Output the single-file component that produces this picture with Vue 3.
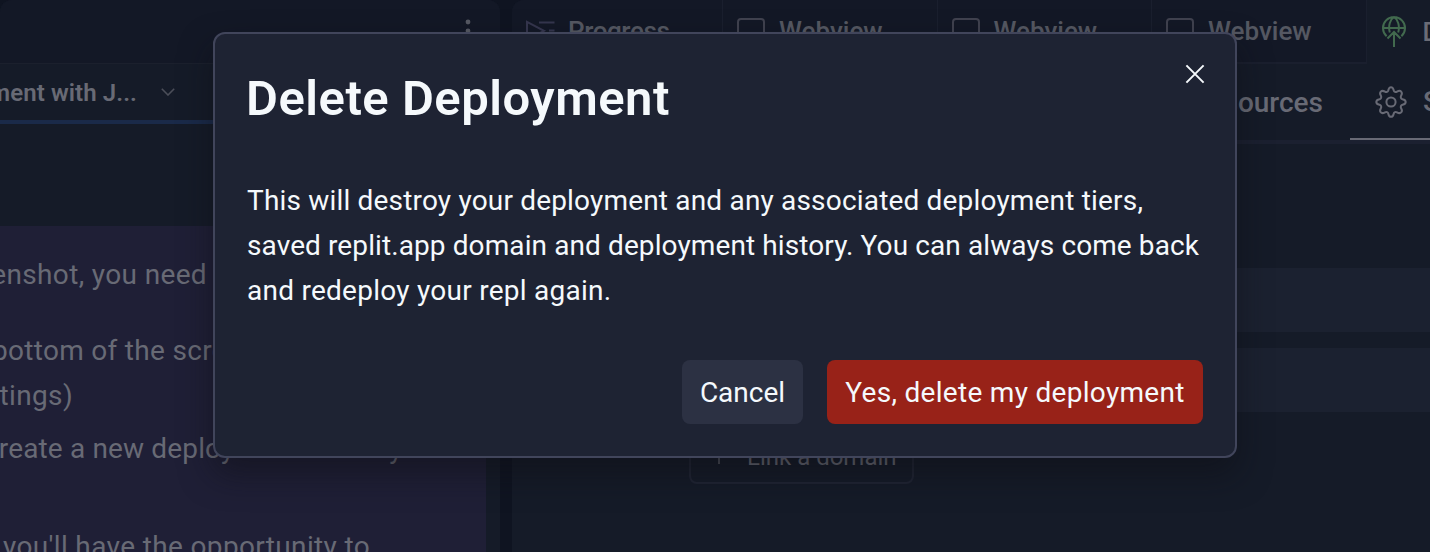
<script setup>
const webviews = [1, 2, 3]
</script>

<template>
  <div class="workspace">
    <section class="pane chat">
      <header class="chat-top">
        <svg class="kebab" width="6" height="24" viewBox="0 0 6 24"><circle cx="3" cy="3" r="2.4" /><circle cx="3" cy="12" r="2.4" /><circle cx="3" cy="21" r="2.4" /></svg>
      </header>
      <div class="chat-bar">
        <span class="chat-name">Deployment with J...</span>
        <svg class="chevron" width="14" height="8" viewBox="0 0 14 8"><path d="M.8 .8 7 7 13.2 .8" /></svg>
      </div>
      <div class="message">
        <p class="row r1">In the screenshot, you need</p>
        <p class="row r2">bottom of the screen</p>
        <p class="row r3">(Settings)</p>
        <p class="row r4">create a new deployment where you</p>
        <p class="row r5">you'll have the opportunity to</p>
      </div>
    </section>

    <section class="pane tool">
      <nav class="tabs">
        <div class="tab progress">
          <svg width="29" height="28" viewBox="0 0 29 28"><path d="M1 4.8v18l17-9zM13 5.5h15.500M23 13.500h5.500M13 22h15.500" /></svg>
          <span>Progress</span>
        </div>
        <div v-for="n in webviews" :key="n" class="tab">
          <svg width="28" height="28" viewBox="0 0 28 28"><rect x="1" y="2" width="26" height="23" rx="3" /></svg>
          <span>Webview</span>
        </div>
        <div class="tab active">
          <svg class="globe" width="24" height="32" viewBox="0 0 24 32">
            <path d="M4.600 20.200A11 11 0 1 1 19.400 20.200M1 12h22M7.800 16.500C6 10 8 3.500 12 1c4 2.500 6 9 4.200 15.500M12 31V16M5.500 22.500 12 16l6.500 6.500" />
          </svg>
          <span>Deployments</span>
        </div>
      </nav>
      <nav class="subtabs">
        <div class="sub">Resources</div>
        <div class="sub on">
          <svg width="32" height="32" viewBox="0 0 32 32">
            <circle cx="16" cy="16" r="4.600" />
            <path d="M13.300 4.300C13.800 2 14.600 1.200 16 1.200s2.200.8 2.700 3.100c.4 1.600 1.900 2.200 3.300 1.400 2-1.200 3.200-1.200 4.200-.1s1.100 2.200-.1 4.200c-.8 1.400-.2 3 1.400 3.400 2.400.5 3.200 1.300 3.200 2.800s-.8 2.300-3.200 2.800c-1.600.4-2.200 2-1.400 3.400 1.200 2 1.200 3.100.1 4.200s-2.200 1.100-4.200-.1c-1.400-.8-2.900-.2-3.300 1.400-.5 2.300-1.300 3.100-2.700 3.100s-2.200-.8-2.700-3.100c-.4-1.600-1.900-2.200-3.300-1.400-2 1.200-3.100 1.200-4.200.1s-1.100-2.200.1-4.200c.8-1.400.2-3-1.400-3.400C2.100 18.300 1.300 17.500 1.300 16s.8-2.300 3.200-2.800c1.600-.4 2.200-2 1.400-3.400-1.200-2-1.200-3.100-.1-4.200s2.200-1.100 4.200.1c1.400.8 2.900.2 3.300-1.400z" />
          </svg>
          <span>Settings</span>
        </div>
      </nav>
      <div class="settings">
        <div class="card"></div>
        <div class="card"></div>
        <div class="link">
          <svg width="20" height="20" viewBox="0 0 20 20"><path d="M10 1v18M1 10h18" /></svg>
          <span>Link a domain</span>
        </div>
      </div>
    </section>

    <div class="modal" role="dialog">
      <svg class="close" width="20" height="20" viewBox="0 0 20 20"><path d="M1.400 1.400 18.600 18.600M18.600 1.400 1.400 18.600" /></svg>
      <h1>Delete Deployment</h1>
      <p class="body">
        <span class="l1">This will destroy your deployment and any associated deployment tiers,</span>
        <span class="l2">saved replit.app domain and deployment history. You can always come back</span>
        <span class="l3">and redeploy your repl again.</span>
      </p>
      <div class="actions">
        <button class="cancel">Cancel</button>
        <button class="danger">Yes, delete my deployment</button>
      </div>
    </div>
  </div>
</template>

<style>
body { background: #0f1421; }
</style>

<style scoped>
.workspace {
  position: relative;
  display: flex;
  gap: 12px;
  width: 1430px;
  height: 552px;
  overflow: hidden;
  background: #0f1421;
  font-family: Roboto, "Liberation Sans", sans-serif;
  color: #686a75;
  white-space: nowrap;
}
svg { flex: none; fill: none; stroke: currentColor; stroke-width: 2; }
p, h1 { margin: 0; }
.pane { display: flex; flex-direction: column; overflow: hidden; background: #151b28; }
.chat { width: 500px; flex: none; border-radius: 12px 12px 0 0; }
.tool { flex: 1; min-width: 0; border-radius: 12px 0 0 0; }

.chat-top {
  box-sizing: border-box;
  height: 64px;
  flex: none;
  padding: 19px 29px 0 0;
  display: flex;
  justify-content: flex-end;
  background: #131826;
  border-bottom: 1px solid #1b202d;
}
.kebab { fill: #565963; stroke: none; }
.chat-bar {
  box-sizing: border-box;
  height: 60px;
  flex: none;
  display: flex;
  align-items: center;
  border-bottom: 4px solid #1a2a49;
  font-size: 24px;
  font-weight: 600;
  letter-spacing: 0.1px;
}
.chat-name { width: 137px; display: flex; justify-content: flex-end; line-height: 28px; margin-top: 1px; }
.chevron { margin-left: 24px; stroke: #4b4e59; stroke-width: 1.6; }
.message {
  width: 486px;
  box-sizing: border-box;
  height: 340px;
  flex: none;
  margin-top: 102px;
  padding-top: 26px;
  background: #1f1f36;
  font-size: 28px;
  line-height: 45px;
  letter-spacing: 0.35px;
}
.row { display: flex; }
.r1 { width: 207px; justify-content: flex-end; }
.r2 { margin: 31px 0 0 -8px; letter-spacing: 0.3px; }
.r3 { width: 73px; justify-content: flex-end; }
.r4 { margin: 8px 0 0 -16px; letter-spacing: 0.15px; }
.r5 { margin: 53px 0 0 3px; }

.tabs { display: flex; height: 64px; flex: none; font-size: 26px; font-weight: 500; color: #555862; }
.tab {
  box-sizing: border-box;
  width: 214.500px;
  flex: none;
  display: flex;
  align-items: center;
  gap: 14px;
  padding-left: 14px;
  background: #131826;
  border-right: 1px solid #1a1f2e;
  border-bottom: 2px solid #1a1f2e;
}
.tab svg { color: #40424f; }
.progress { width: 211px; }
.progress span { letter-spacing: -0.4px; margin-left: -1px; }
.progress svg { color: #35364e; }
.active { background: none; border: 0; color: #6a6c76; gap: 17px; padding-left: 15px; width: 220px; }
.tab .globe { color: #426a4e; }
.subtabs {
  box-sizing: border-box;
  height: 80px;
  flex: none;
  display: flex;
  padding-left: 685px;
  border-bottom: 4px solid #1b2030;
  font-size: 28px;
  font-weight: 500;
}
.sub { box-sizing: border-box; height: 76px; display: flex; align-items: center; width: 153px; justify-content: flex-end; padding-right: 27px; flex: none; }
.on { width: 220px; justify-content: flex-start; padding: 0 0 0 25px; gap: 16px; border-bottom: 2px solid #686a75; }
.on svg { margin-bottom: -2px; }
.settings { margin-top: 124px; padding-left: 177px; }
.card { height: 64px; margin-bottom: 16px; background: #1b2130; }
.link {
  box-sizing: border-box;
  width: 225px;
  height: 56px;
  display: flex;
  align-items: center;
  gap: 18px;
  padding-left: 18px;
  border: 2px solid #202534;
  border-radius: 8px;
  font-size: 24px;
}
.link svg { margin-top: -3px; color: #4b4e59; }
.link span { margin-top: 2px; }

.modal {
  position: absolute;
  left: 213px;
  top: 32px;
  box-sizing: border-box;
  width: 1024px;
  height: 426px;
  padding: 32px;
  border: 2px solid #41455b;
  border-radius: 12px;
  background: #1e2333;
  box-shadow: 0 16px 32px rgba(14, 14, 20, 0.500);
  color: #f5f9fc;
}
.close { position: absolute; right: 30px; top: 30px; }
h1 { font-size: 49px; line-height: 64px; font-weight: 600; letter-spacing: 0.5px; padding-top: 1px; margin-left: -1px; }
.body { margin-top: 47px; font-size: 28px; line-height: 45px; }
.body span { display: block; }
.l1 { letter-spacing: 0.18px; }
.l2 { letter-spacing: 0.1px; }
.l3 { letter-spacing: 0.26px; }
.actions { display: flex; justify-content: flex-end; gap: 24px; margin-top: 47px; }
button {
  height: 64px;
  padding: 0;
  border: 0;
  border-radius: 8px;
  color: #f5f9fc;
  font: 400 28px Roboto, "Liberation Sans", sans-serif;
  letter-spacing: 0.3px;
}
.cancel { width: 121px; background: #2c3143; letter-spacing: 0; }
.danger { width: 376px; background: #982218; }
</style>
